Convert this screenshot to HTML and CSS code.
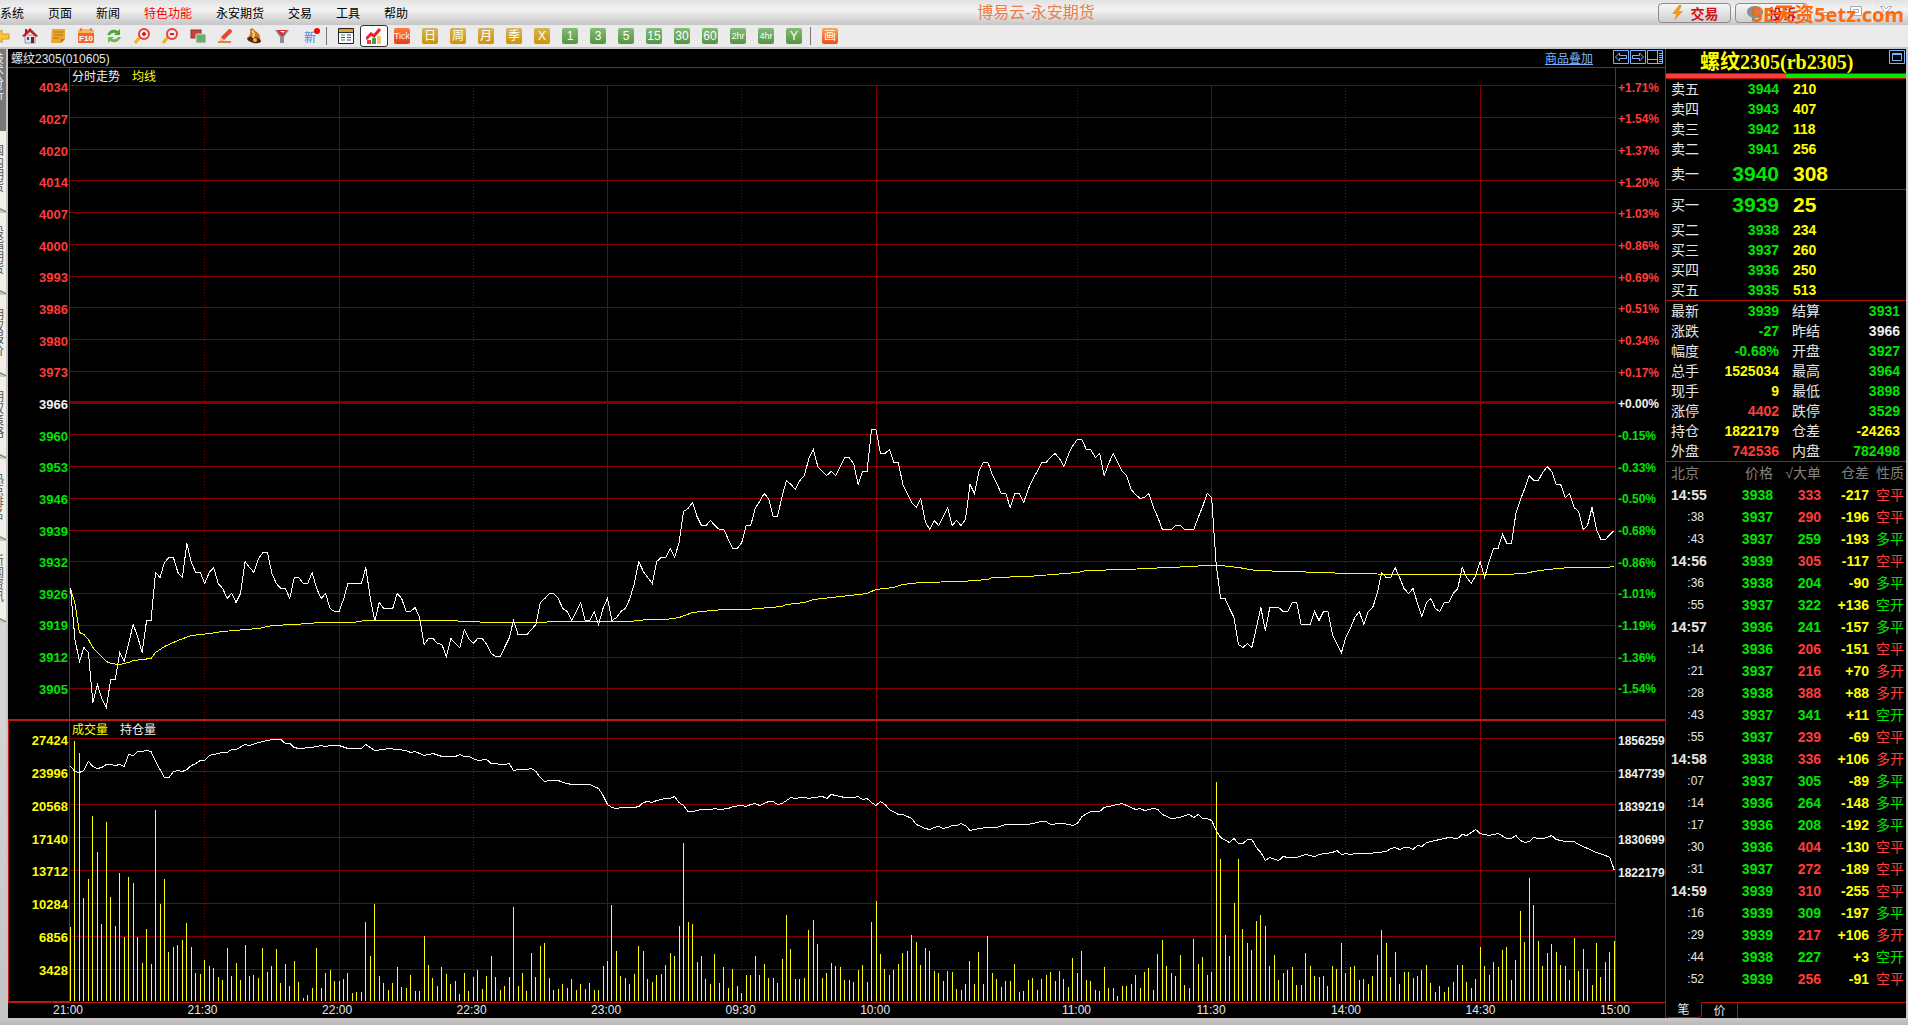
FILE: index.html
```html
<!DOCTYPE html>
<html lang="zh-CN">
<head>
  <meta charset="UTF-8">
  <meta name="viewport" content="width=device-width, initial-scale=1.0">
  <title>博易云-永安期货</title>
  <link rel="stylesheet" href="styles.css">
</head>
<body>
  <header class="titlebar">
    <nav class="menu">
      <a href="#">系统</a>
      <a href="#">页面</a>
      <a href="#">新闻</a>
      <a href="#" class="hot">特色功能</a>
      <a href="#">永安期货</a>
      <a href="#">交易</a>
      <a href="#">工具</a>
      <a href="#">帮助</a>
    </nav>
    <h1>博易云-永安期货</h1>
    <div class="window-actions">
      <button class="pill"><svg width="14" height="16" viewBox="0 0 14 16"><path d="M8 0L1 9h4L3 16l9-10H8l3-6z" fill="#f39a1e"/></svg>交易</button>
      <button class="pill"><svg width="16" height="16" viewBox="0 0 16 16"><path d="M8 1c5 0 8 2.500 8 6s-3 6-7 6l-4 3 0-3.500C2 11.500 0 9.500 0 7c0-3.500 3-6 8-6z" fill="#8d8d8d"/></svg>投诉</button>
      <button class="win" aria-label="最小化"><svg width="14" height="12" viewBox="0 0 14 12"><path d="M1.500 7.500h11v3h-11z" fill="#fff" stroke="#aaa"/></svg></button>
      <button class="win" aria-label="最大化"><svg width="14" height="12" viewBox="0 0 14 12"><path d="M1.500 1.500h11v9h-11zM4.500 4.500h5v3h-5z" fill="#fff" stroke="#aaa"/></svg></button>
      <button class="win" aria-label="关闭"><svg width="14" height="12" viewBox="0 0 14 12"><path d="M1.500 1.500h3L7 4l2.500-2.500h3L9 6l3.500 4.500h-3L7 8l-2.500 2.500h-3L5 6z" fill="#fff" stroke="#aaa"/></svg></button>
      <span class="site-mark">5E天资5etz.com</span>
    </div>
  </header>

  <div class="toolbar">
    <button aria-label="后退"><svg viewBox="0 0 16 16"><path d="M1 8l7-6v4h7v5H8v4z" fill="#fdc63a" stroke="#d99a10"/></svg></button>
    <button aria-label="首页"><svg viewBox="0 0 16 16"><path d="M3 7h10v8H3z" fill="#dfe3ea" stroke="#8f97a5"/><path d="M9 9h3v6H9z" fill="#7a1a22"/><path d="M5 9h2v3H5z" fill="#44516a"/><path d="M8 0L0 8l2 1 6-5 6 5 2-1z" fill="#c8202f"/><path d="M3 1h2v4L3 6z" fill="#9c1b28"/></svg></button>
    <button aria-label="公告"><svg viewBox="0 0 16 16"><path d="M2 1h13v10l-4 4H1z" fill="#eaa62c"/><path d="M11 15v-4h4z" fill="#b9770f"/><path d="M4 4h9M4 7h9M3 10h6" stroke="#b57812"/></svg></button>
    <button aria-label="F10"><svg viewBox="0 0 16 16"><rect x="0" y="2" width="16" height="13" rx="1" fill="#f0682e"/><path d="M0 3q0-2 2-2h11q3 0 3 2v2H0z" fill="#ffb35a"/><path d="M3 0v3M13 0v3" stroke="#a44"/><text x="8" y="13" class="icon-f10">F10</text></svg></button>
    <button aria-label="刷新"><svg viewBox="0 0 16 16"><path d="M1 7q4-8 11-4l2-2v6H8l2-2Q6 4 4 7z" fill="#4fa53a"/><path d="M15 9q-4 8-11 4l-2 2V9h6l-2 2q4 1 6-2z" fill="#6cbb4f"/></svg></button>
    <button aria-label="放大"><svg viewBox="0 0 16 16"><path d="M1 15l5-6" stroke="#f7b21c" stroke-width="3"/><circle cx="10" cy="6" r="5" fill="#fbe9ea" stroke="#e5403c" stroke-width="2"/><path d="M8 6h4M10 4v4" stroke="#d22" stroke-width="2"/></svg></button>
    <button aria-label="缩小"><svg viewBox="0 0 16 16"><path d="M1 15l5-6" stroke="#f7b21c" stroke-width="3"/><circle cx="10" cy="6" r="5" fill="#fbe9ea" stroke="#e5403c" stroke-width="2"/><path d="M8 6h4" stroke="#d22" stroke-width="2"/></svg></button>
    <button aria-label="叠加"><svg viewBox="0 0 16 16"><rect x="1" y="2" width="10" height="8" fill="#c8403c" stroke="#9c2a28"/><rect x="6" y="6" width="10" height="9" rx="1" fill="#69ad70" stroke="#cfe6d0"/></svg></button>
    <button aria-label="画线"><svg viewBox="0 0 16 16"><path d="M0 14h13" stroke="#e0843c" stroke-width="2"/><path d="M2 13l1-4 8-8q3 0 3 3l-8 8z" fill="#e24a30"/><path d="M2 13l1-4 3 3z" fill="#f5cf9a"/></svg></button>
    <button aria-label="预警"><svg viewBox="0 0 16 16"><path d="M4 1q3-2 4 1 6 3 6 8l1 4L1 10q4-2 3-9z" fill="#c9792a"/><ellipse cx="8" cy="12" rx="7" ry="3" transform="rotate(12 8 12)" fill="#5f2410"/><circle cx="9" cy="12" r="2" fill="#f2c03a"/><path d="M6 3q3 2 1 7" stroke="#ffd679" stroke-width="2" fill="none"/></svg></button>
    <button aria-label="筛选"><svg viewBox="0 0 16 16"><path d="M1 2h14l-5 7v6H6V9z" fill="#8c9096"/><path d="M3 2h10L9 8H7z" fill="#e3262c"/><path d="M6 3h5L9 5z" fill="#fff"/></svg></button>
    <button class="new" aria-label="新功能">新<i></i></button>
    <span class="sep"></span>
    <button aria-label="报价"><svg viewBox="0 0 16 16"><path d="M.5.5h15v15H.5z" fill="#fff" stroke="#222"/><path d="M1 1h14v3H1z" fill="#d9a520"/><path d="M1 4.500h14" stroke="#333"/><path d="M3 7h4M3 12h4" stroke="#1a9c3a"/><path d="M9 7h4M9 12h4" stroke="#2a3fb0"/><path d="M3 9.500h4M9 9.500h4" stroke="#c22"/></svg></button>
    <button class="active" aria-label="分时图"><svg viewBox="0 0 16 16"><path d="M1 12h4v4H1z" fill="#d14a36"/><path d="M6 10h4v6H6z" fill="#46a049"/><path d="M11 8h4v8h-4z" fill="#e9c96a"/><path d="M0 11l5-5 3 2 6-7" fill="none" stroke="#e8202c" stroke-width="3"/></svg></button>
    <button class="period red tick-btn">Tick</button>
    <button class="period gold">日</button>
    <button class="period gold">周</button>
    <button class="period gold">月</button>
    <button class="period gold">季</button>
    <button class="period gold">X</button>
    <button class="period green">1</button>
    <button class="period green">3</button>
    <button class="period green">5</button>
    <button class="period green">15</button>
    <button class="period green">30</button>
    <button class="period green">60</button>
    <button class="period green hour">2hr</button>
    <button class="period green hour">4hr</button>
    <button class="period green">Y</button>
    <span class="sep"></span>
    <button class="period orange">画</button>
  </div>

  <main class="workspace">
    <nav class="side-tabs">
      <a href="#" class="current"><span>技术分析</span></a>
      <a href="#"><span>国内期货</span></a>
      <a href="#"><span>股指期货</span></a>
      <a href="#"><span>期权报价</span></a>
      <a href="#"><span>期权策略</span></a>
      <a href="#"><span>热点排名</span></a>
      <a href="#"><span>新闻资讯</span></a>
    </nav>

    <section class="chart">
      <div class="chart-head">
        <span>螺纹2305(010605)</span>
        <div class="chart-tools">
          <a href="#">商品叠加</a>
          <button aria-label="上一个"><svg width="16" height="14" viewBox="0 0 16 14"><path d="M.5.5h15v13H.5zM2.500 7l4-4v2.500h7v3h-7V11z"/></svg></button>
          <button aria-label="下一个"><svg width="16" height="14" viewBox="0 0 16 14"><path d="M.5.5h15v13H.5zM13.500 7l-4-4v2.500h-7v3h7V11z"/></svg></button>
          <button aria-label="布局"><svg width="16" height="14" viewBox="0 0 16 14"><path d="M.5.5h15v13H.5zM.5 9.500h10M10.500.5v13M12 3.500h3M12 5.500h3M12 7.500h3M12 9.500h3M12 11.500h3"/></svg></button>
        </div>
      </div>

      <div class="pane price-pane">
        <ul class="scale left">
          <li class="up">4034</li><li class="up">4027</li><li class="up">4020</li><li class="up">4014</li><li class="up">4007</li>
          <li class="up">4000</li><li class="up">3993</li><li class="up">3986</li><li class="up">3980</li><li class="up">3973</li>
          <li class="flat">3966</li>
          <li class="down">3960</li><li class="down">3953</li><li class="down">3946</li><li class="down">3939</li><li class="down">3932</li>
          <li class="down">3926</li><li class="down">3919</li><li class="down">3912</li><li class="down">3905</li>
        </ul>
        <div class="plot">
          <svg id="price" viewBox="0 0 1545 651" preserveAspectRatio="none"></svg>
          <p class="legend"><span class="white">分时走势</span><span class="vol">均线</span></p>
        </div>
        <ul class="scale right">
          <li class="up">+1.71%</li><li class="up">+1.54%</li><li class="up">+1.37%</li><li class="up">+1.20%</li><li class="up">+1.03%</li>
          <li class="up">+0.86%</li><li class="up">+0.69%</li><li class="up">+0.51%</li><li class="up">+0.34%</li><li class="up">+0.17%</li>
          <li class="flat">+0.00%</li>
          <li class="down">-0.15%</li><li class="down">-0.33%</li><li class="down">-0.50%</li><li class="down">-0.68%</li><li class="down">-0.86%</li>
          <li class="down">-1.01%</li><li class="down">-1.19%</li><li class="down">-1.36%</li><li class="down">-1.54%</li>
        </ul>
      </div>

      <div class="pane volume-pane">
        <ul class="scale left">
          <li class="vol">27424</li><li class="vol">23996</li><li class="vol">20568</li><li class="vol">17140</li>
          <li class="vol">13712</li><li class="vol">10284</li><li class="vol">6856</li><li class="vol">3428</li>
        </ul>
        <div class="plot">
          <svg id="volume" viewBox="0 1 1545 281" preserveAspectRatio="none"></svg>
          <p class="legend"><span class="vol">成交量</span><span class="white">持仓量</span></p>
        </div>
        <ul class="scale right">
          <li class="flat">1856259</li><li class="flat">1847739</li><li class="flat">1839219</li><li class="flat">1830699</li>
          <li class="flat">1822179</li><li></li><li></li><li></li>
        </ul>
      </div>

      <ol class="times">
        <li>21:00</li><li>21:30</li><li>22:00</li><li>22:30</li><li>23:00</li><li>09:30</li>
        <li>10:00</li><li>11:00</li><li>11:30</li><li>14:00</li><li>14:30</li><li>15:00</li>
      </ol>
    </section>

    <aside class="quote">
      <div class="quote-head">
        <h2>螺纹2305(rb2305)</h2>
        <button aria-label="展开"><svg width="16" height="14" viewBox="0 0 16 14"><path d="M.5.5h15v13H.5zM3.500 3.500h9v7h-9zM3.500 4.500h9"/></svg></button>
      </div>
      <div class="ratio"><span></span></div>

      <table class="book">
        <tr><th>卖五</th><td class="down">3944</td><td class="lots">210</td></tr>
        <tr><th>卖四</th><td class="down">3943</td><td class="lots">407</td></tr>
        <tr><th>卖三</th><td class="down">3942</td><td class="lots">118</td></tr>
        <tr><th>卖二</th><td class="down">3941</td><td class="lots">256</td></tr>
        <tr class="best"><th>卖一</th><td class="down">3940</td><td class="lots">308</td></tr>
      </table>
      <table class="book">
        <tr class="best"><th>买一</th><td class="down">3939</td><td class="lots">25</td></tr>
        <tr><th>买二</th><td class="down">3938</td><td class="lots">234</td></tr>
        <tr><th>买三</th><td class="down">3937</td><td class="lots">260</td></tr>
        <tr><th>买四</th><td class="down">3936</td><td class="lots">250</td></tr>
        <tr><th>买五</th><td class="down">3935</td><td class="lots">513</td></tr>
      </table>
      <table class="stats">
        <tr><th>最新</th><td class="down">3939</td><th>结算</th><td class="down">3931</td></tr>
        <tr><th>涨跌</th><td class="down">-27</td><th>昨结</th><td class="flat">3966</td></tr>
        <tr><th>幅度</th><td class="down">-0.68%</td><th>开盘</th><td class="down">3927</td></tr>
        <tr><th>总手</th><td class="vol">1525034</td><th>最高</th><td class="down">3964</td></tr>
        <tr><th>现手</th><td class="vol">9</td><th>最低</th><td class="down">3898</td></tr>
        <tr><th>涨停</th><td class="up">4402</td><th>跌停</th><td class="down">3529</td></tr>
        <tr><th>持仓</th><td class="vol">1822179</td><th>仓差</th><td class="vol">-24263</td></tr>
        <tr><th>外盘</th><td class="up">742536</td><th>内盘</th><td class="down">782498</td></tr>
      </table>

      <table class="ticks">
        <thead>
          <tr><th>北京</th><th>价格</th><th>√大单</th><th>仓差</th><th>性质</th></tr>
        </thead>
        <tbody>
          <tr class="minute"><td>14:55</td><td>3938</td><td class="up">333</td><td>-217</td><td class="up">空平</td></tr>
          <tr><td>:38</td><td>3937</td><td class="up">290</td><td>-196</td><td class="up">空平</td></tr>
          <tr><td>:43</td><td>3937</td><td class="down">259</td><td>-193</td><td class="down">多平</td></tr>
          <tr class="minute"><td>14:56</td><td>3939</td><td class="up">305</td><td>-117</td><td class="up">空平</td></tr>
          <tr><td>:36</td><td>3938</td><td class="down">204</td><td>-90</td><td class="down">多平</td></tr>
          <tr><td>:55</td><td>3937</td><td class="down">322</td><td>+136</td><td class="down">空开</td></tr>
          <tr class="minute"><td>14:57</td><td>3936</td><td class="down">241</td><td>-157</td><td class="down">多平</td></tr>
          <tr><td>:14</td><td>3936</td><td class="up">206</td><td>-151</td><td class="up">空平</td></tr>
          <tr><td>:21</td><td>3937</td><td class="up">216</td><td>+70</td><td class="up">多开</td></tr>
          <tr><td>:28</td><td>3938</td><td class="up">388</td><td>+88</td><td class="up">多开</td></tr>
          <tr><td>:43</td><td>3937</td><td class="down">341</td><td>+11</td><td class="down">空开</td></tr>
          <tr><td>:55</td><td>3937</td><td class="up">239</td><td>-69</td><td class="up">空平</td></tr>
          <tr class="minute"><td>14:58</td><td>3938</td><td class="up">336</td><td>+106</td><td class="up">多开</td></tr>
          <tr><td>:07</td><td>3937</td><td class="down">305</td><td>-89</td><td class="down">多平</td></tr>
          <tr><td>:14</td><td>3936</td><td class="down">264</td><td>-148</td><td class="down">多平</td></tr>
          <tr><td>:17</td><td>3936</td><td class="down">208</td><td>-192</td><td class="down">多平</td></tr>
          <tr><td>:30</td><td>3936</td><td class="up">404</td><td>-130</td><td class="up">空平</td></tr>
          <tr><td>:31</td><td>3937</td><td class="up">272</td><td>-189</td><td class="up">空平</td></tr>
          <tr class="minute"><td>14:59</td><td>3939</td><td class="up">310</td><td>-255</td><td class="up">空平</td></tr>
          <tr><td>:16</td><td>3939</td><td class="down">309</td><td>-197</td><td class="down">多平</td></tr>
          <tr><td>:29</td><td>3939</td><td class="up">217</td><td>+106</td><td class="up">多开</td></tr>
          <tr><td>:44</td><td>3938</td><td class="down">227</td><td>+3</td><td class="down">空开</td></tr>
          <tr><td>:52</td><td>3939</td><td class="up">256</td><td>-91</td><td class="up">空平</td></tr>
        </tbody>
      </table>

      <div class="quote-tabs">
        <button class="current">笔</button>
        <button>价</button>
        <span></span>
      </div>
    </aside>
  </main>

  <footer class="statusbar"></footer>

  <script src="chart.js"></script>
</body>
</html>
```

FILE: styles.css
```css
* {
  box-sizing: border-box;
  margin: 0;
  padding: 0;
}

body {
  display: flex;
  flex-direction: column;
  min-height: 100vh;
  overflow-x: hidden;
  font-family: "Liberation Sans", "Noto Sans CJK SC", sans-serif;
  font-size: 12px;
  background: #c8c8c8;
  color: #e6e6e6;
}

button {
  border: none;
  background: none;
  font-family: inherit;
  cursor: pointer;
}

ul, ol {
  list-style: none;
}

table {
  width: 100%;
  table-layout: fixed;
  border-collapse: collapse;
}

.up { color: #ff3c3c; }
.down { color: #00e600; }
.flat { color: #f0f0f0; }
.vol { color: #ffff00; }
.white { color: #f0f0f0; }

/* title bar */
.titlebar {
  display: grid;
  grid-template-columns: 1fr auto 1fr;
  align-items: center;
  height: 25px;
  background: linear-gradient(#e2e2e2, #f3f3f3 40%, #c6c6c6);
}

.menu {
  display: flex;
  gap: 24px;
}

.menu a {
  color: #000;
  text-decoration: none;
  white-space: nowrap;
}

.menu a.hot {
  color: #f00;
}

.titlebar h1 {
  margin-left: 164px;
  font-size: 16px;
  font-weight: normal;
  line-height: 24px;
  color: #ee7d47;
}

.window-actions {
  display: flex;
  align-items: center;
  justify-content: flex-end;
  gap: 4px;
  position: relative;
  padding-right: 10px;
}

.pill {
  display: flex;
  align-items: center;
  justify-content: center;
  gap: 6px;
  width: 73px;
  height: 20px;
  border: 1px solid #8c8c8c;
  border-radius: 4px;
  background: linear-gradient(#f6f6f6, #cfcfcf);
  font-size: 14px;
  font-weight: bold;
  color: #d8101c;
}

.win {
  width: 26px;
  height: 20px;
  border-left: 1px solid #f4f4f4;
}

.site-mark {
  position: absolute;
  right: 4px;
  top: -2px;
  font-family: "Noto Sans", "Noto Sans CJK SC", sans-serif;
  font-size: 20px;
  font-weight: bold;
  line-height: 28px;
  color: #ff6a0a;
}

/* toolbar */
.toolbar {
  display: flex;
  align-items: center;
  height: 24px;
  margin-left: -12px;
  border-bottom: 2px solid #c8c4c4;
  background: #ebebeb;
}

.toolbar button {
  display: flex;
  align-items: center;
  justify-content: center;
  flex: none;
  width: 28px;
  height: 22px;
}

.toolbar svg {
  width: 16px;
  height: 16px;
}

.toolbar .active {
  border: 1px solid #333;
  border-radius: 3px;
  background: #fff;
}

.toolbar .new {
  position: relative;
  font-size: 12px;
  color: #3c8ce6;
}

.new i {
  position: absolute;
  top: 3px;
  right: 4px;
  width: 6px;
  height: 6px;
  border-radius: 50%;
  background: #f00;
}

.sep {
  width: 1px;
  height: 18px;
  margin: 0 5px 0 2px;
  background: #777;
}

.toolbar .period {
  width: 16px;
  height: 16px;
  margin: 0 6px;
  border-radius: 2px;
  font-size: 12px;
  line-height: 16px;
  color: #fff;
}

.toolbar .gold { background: linear-gradient(#d3b65a, #d09200); }
.toolbar .green { background: linear-gradient(#84bd76, #549544); }
.toolbar .red { background: linear-gradient(#ff7a3c, #e83c1e); }
.toolbar .orange { background: linear-gradient(#ffa84a, #f04a1e); }

.toolbar .hour,
.toolbar .tick-btn {
  font-size: 9px;
}

.icon-f10 {
  font-size: 8px;
  font-weight: bold;
  text-anchor: middle;
  fill: #fff;
}

/* workspace */
.workspace {
  display: flex;
  flex: 1;
  padding-right: 2px;
}

.side-tabs {
  width: 8px;
  border-right: 2px solid #c8c4c4;
  overflow: hidden;
  background: linear-gradient(#f0efe8, #d2d2d2 75%, #c4c4c4);
}

.side-tabs a {
  display: flex;
  justify-content: flex-end;
  height: 82px;
  padding: 14px 2px 0 0;
  background: linear-gradient(25deg, #c8c8c8 3px, #888 3px, #888 4px, #f0efe8 5px);
  line-height: 12px;
  color: #555;
  text-decoration: none;
}

.side-tabs a.current {
  padding-top: 4px;
  background: #777;
  color: #eee;
}

.side-tabs span {
  flex: none;
  width: 12px;
}

/* chart */
.chart {
  display: flex;
  flex-direction: column;
  flex: 1;
  min-width: 0;
  background: #000;
}

.chart-head {
  display: flex;
  align-items: center;
  justify-content: space-between;
  height: 19px;
  padding: 0 2px 2px 3px;
  border-bottom: 1px solid #b41400;
}

.chart-tools {
  display: flex;
  align-items: center;
  gap: 1px;
}

.chart-tools a {
  margin-right: 19px;
  color: #78b4ff;
}

.chart-tools button,
.quote-head button {
  height: 14px;
}

.chart-tools svg,
.quote-head svg {
  display: block;
  fill: none;
  stroke: #78b4ff;
}

.pane {
  display: grid;
  grid-template-columns: 61px 1fr 49px;
}

.price-pane {
  flex: 651 1 0;
  border-bottom: 2px solid #c01810;
}

.volume-pane {
  flex: 281 1 0;
  border-bottom: 1px solid #c01810;
}

.scale {
  display: flex;
  flex-direction: column;
  padding: 4px 2px 14px;
  font-weight: bold;
}

.scale li {
  display: flex;
  align-items: center;
  flex: 1 1 0;
  min-height: 0;
}

.scale.left {
  padding-right: 1px;
  font-size: 13px;
}

.scale.left li {
  justify-content: flex-end;
}

.volume-pane .scale {
  padding-top: 3px;
}

.volume-pane .scale.left {
  border-left: 1px solid #c01810;
  border-bottom: 1px solid #c01810;
}

.plot {
  display: grid;
  min-width: 0;
  border-left: 1px solid #b41400;
  border-right: 1px solid #b41400;
}

.plot svg,
.legend {
  grid-area: 1 / 1;
}

/* takes its height from the pane, never the other way round */
.plot svg {
  width: 100%;
  height: 0;
  min-height: 100%;
  shape-rendering: crispEdges;
  fill: none;
}

.plot path {
  vector-effect: non-scaling-stroke;
}

.grid { stroke: #840000; }
.grid.dotted { stroke-dasharray: 1 2; }
.grid.zero { stroke-width: 2px; }
.line { stroke: #fff; }
.average, .bars { stroke: #ffff00; }

.legend {
  display: flex;
  gap: 12px;
  height: 18px;
  padding-left: 2px;
  line-height: 18px;
}

.times {
  display: grid;
  grid-template-columns: repeat(6, 30fr) 45fr repeat(4, 30fr) 0;
  height: 15px;
  margin: 0 49px 0 61px;
  line-height: 14px;
}

.times li {
  min-width: 0;
  margin-left: -16px;
  white-space: nowrap;
}

/* quote panel */
.quote {
  display: flex;
  flex-direction: column;
  flex: 0 0 241px;
  border-left: 1px solid #b41400;
  background: #000;
  overflow: hidden;
}

.quote-head {
  display: flex;
  align-items: flex-start;
  justify-content: space-between;
  height: 24px;
  padding: 1px 1px 0 34px;
}

.quote-head h2 {
  font-family: "Liberation Serif", "Noto Sans CJK SC", serif;
  font-size: 20px;
  line-height: 24px;
  color: #ffff00;
}

.ratio {
  height: 6px;
  border-top: 1px solid #b41400;
  border-bottom: 1px solid #b41400;
  background: #00e600;
}

.ratio span {
  display: block;
  width: 50%;
  height: 4px;
  background: #ff3c3c;
}

.book, .stats {
  border-bottom: 1px solid #b41400;
  border-collapse: separate;
  border-spacing: 0;
}

.book tr, .stats tr {
  height: 20px;
}

.book .best {
  height: 30px;
}

.quote th {
  padding-left: 5px;
  font-size: 14px;
  font-weight: normal;
  line-height: 20px;
  text-align: left;
  white-space: nowrap;
}

.quote td {
  font-size: 14px;
  font-weight: bold;
  line-height: 20px;
  text-align: right;
}

.quote .best td {
  font-size: 21px;
}

.book th, .stats th:first-child {
  width: 40px;
}

.book td:nth-child(2), .stats td:nth-child(2) {
  width: 73px;
}

.quote .book .lots {
  padding-left: 14px;
  text-align: left;
  color: #ffff00;
}

.stats th:nth-child(3) {
  width: 48px;
  padding-left: 13px;
}

.stats td:last-child {
  padding-right: 6px;
}

.ticks tr {
  height: 22px;
}

.ticks th {
  width: 48px;
  color: #808080;
}

.quote .ticks th:not(:first-child) {
  padding-left: 0;
  text-align: right;
}

.ticks th:first-child { width: 42px; }
.ticks th:nth-child(2) { width: 65px; }
.ticks th:last-child { width: 37px; }

.quote .ticks td:first-child {
  padding: 0 4px 0 5px;
  font-size: 12px;
  font-weight: normal;
}

.quote .ticks .minute td:first-child {
  padding-right: 0;
  font-size: 14px;
  font-weight: bold;
  text-align: left;
}

.ticks td:nth-child(2) { color: #00e600; }
.ticks td:nth-child(4) { color: #ffff00; }

.quote .ticks td:last-child {
  font-weight: normal;
}

.quote .ticks tr > :last-child {
  padding-right: 2px;
}

.quote-tabs {
  display: flex;
  height: 16px;
  margin-top: auto;
}

.quote-tabs button {
  width: 36px;
  border-top: 1px solid #b41400;
  border-right: 1px solid #b41400;
  font-size: 12px;
  line-height: 14px;
  color: #e6e6e6;
}

.quote-tabs .current {
  border-top: none;
  border-bottom: 1px solid #b41400;
  border-radius: 0 0 4px 4px;
}

.quote-tabs span {
  flex: 1;
  border-top: 1px solid #b41400;
}

.statusbar {
  height: 7px;
  background: linear-gradient(#ccc8c8, #b8b8b8);
}
```

FILE: chart.js
```js
// one value per trading minute, 21:00 - 15:00
const STEP = 4.475;

const price = [
  520,571,593,579,584,634,616,630,639,611, 611,584,593,575,556,568,584,552,552,504,
  509,494,489,489,504,509,475,494,504,504, 515,504,499,515,520,530,525,534,525,493,
  499,504,490,484,484,505,515,520,520,530, 509,509,515,515,504,520,530,525,540,543,
  543,531,515,515,515,515,499,530,552,534, 540,540,540,525,530,543,543,539,549,576,
  570,570,575,576,588,570,575,579,561,570, 575,570,570,576,585,588,588,579,570,552,
  566,566,566,561,556,534,530,525,525,530, 540,543,552,543,534,552,552,543,556,540,
  530,552,549,543,540,530,515,493,503,509, 515,493,489,489,480,489,474,443,440,434,
  448,457,457,452,457,461,461,471,480,480, 474,457,457,440,433,425,430,448,448,428,
  412,416,421,412,407,390,381,398,403,407, 403,407,398,389,389,395,416,403,403,361,
  361,385,385,381,394,394,416,425,434,439, 430,453,461,452,457,448,439,457,452,457,
  451,416,425,403,394,394,406,415,425,425, 439,425,425,434,421,411,403,394,394,389,
  385,390,398,386,377,371,371,381,381,389, 385,407,395,385,394,403,407,421,426,430,
  429,425,439,449,461,461,461,457,457,461, 461,461,449,438,425,429,495,530,530,540,
  549,576,579,575,579,559,539,562,539,539, 539,543,543,534,534,556,556,556,543,552,
  543,543,566,575,584,569,560,549,543,556, 543,539,525,504,509,509,499,509,520,525,
  520,535,548,534,530,540,543,534,534,525, 520,499,509,515,507,493,509,493,480,480,
  466,475,475,445,431,420,407,412,412,404, 398,403,416,416,429,425,439,443,461,457,
  439,461,471,471,466,462
];

const average = [
  [0,520],[1,535],[2,564],[3,566],[4,571],[5,579],[6,584],[7,588],[8,593],[9,595],[11,596],[13,594],[14,592],[18,590],
  [19,584],[21,578],[22,576],[24,572],[27,567],[31,565],[34,563],[42,560],[45,557],[50,556],[56,554],[63,554],[66,552],
  [84,552],[94,554],[106,554],[107,553],[125,553],[129,551],[133,551],[136,549],[139,544],[141,543],[146,541],[151,541],
  [159,538],[160,536],[164,534],[166,531],[172,528],[178,525],[180,521],[184,519],[186,516],[190,514],[199,513],[205,511],
  [206,509],[214,508],[225,504],[227,502],[236,501],[245,499],[251,498],[253,497],[257,497],[261,499],[265,502],[272,503],
  [280,504],[285,505],[299,506],[320,506],[325,505],[327,503],[330,501],[335,499],[343,499],[345,498]
];

const volume = [
  74,260,248,103,122,185,149,77,179,104, 75,128,64,124,118,64,38,72,37,191,
  97,122,49,54,56,61,78,54,28,27, 41,35,33,24,21,53,25,38,21,56,
  25,26,23,53,29,35,52,18,37,15, 40,19,3,6,13,53,13,28,31,20,
  20,22,28,8,9,9,79,45,97,25, 18,11,18,34,14,13,26,10,10,65,
  36,23,15,34,27,17,20,7,28,10, 24,31,12,25,45,24,11,15,24,94,
  15,28,10,48,24,55,58,23,11,12, 17,13,22,11,17,12,18,11,11,35,
  40,96,50,25,23,17,27,55,50,22, 19,26,27,36,48,45,75,158,79,77,
  39,45,22,17,47,18,34,13,32,15, 8,26,26,45,26,37,23,23,18,42,
  86,52,22,22,23,71,81,57,23,28, 38,35,34,21,21,19,31,36,19,79,
  100,47,32,26,31,37,48,50,66,59, 36,53,50,30,28,20,30,29,12,11,
  17,40,17,49,17,65,28,22,14,20, 20,37,9,10,21,23,11,22,26,29,
  20,30,22,14,43,28,50,21,20,11, 10,34,13,13,5,15,15,17,26,13,
  29,33,11,47,61,35,28,25,46,16, 13,62,37,44,26,29,219,142,66,45,
  98,142,72,58,51,80,86,75,35,46, 21,28,31,34,16,16,48,35,25,24,
  25,15,35,32,58,28,34,35,21,22, 17,25,46,71,58,24,49,17,29,29,
  23,25,31,36,18,9,15,9,14,19, 36,36,19,13,22,54,35,26,39,34,
  51,54,21,41,90,59,123,96,60,35, 48,57,49,36,35,21,63,30,52,32,
  16,58,24,39,49,60
];

const openInterest = [
  [0,46],[1,51],[2,52],[3,50],[4,41],[5,46],[6,48],[7,47],[8,44],[9,44],[10,45],[11,44],[12,46],[13,34],[14,35],[15,31],
  [16,31],[17,30],[18,31],[19,41],[20,49],[21,57],[22,57],[23,51],[24,50],[25,51],[26,49],[27,45],[28,43],[29,40],[30,40],
  [31,35],[32,34],[34,32],[35,32],[36,29],[37,29],[39,24],[40,25],[42,22],[45,19],[47,19],[48,23],[49,23],[50,27],[51,28],
  [54,27],[56,25],[57,26],[58,25],[60,25],[62,28],[65,28],[66,24],[68,30],[70,29],[71,28],[73,29],[75,30],[76,32],[77,31],
  [79,35],[81,33],[83,36],[86,36],[87,34],[88,36],[89,36],[91,40],[93,39],[94,43],[97,44],[98,43],[99,50],[100,49],[102,49],
  [103,48],[104,51],[105,57],[106,61],[107,60],[109,60],[110,62],[112,64],[116,64],[118,68],[119,75],[120,84],[121,87],
  [122,88],[123,87],[126,87],[127,86],[128,82],[129,81],[130,82],[131,80],[133,78],[134,78],[135,76],[136,82],[137,85],
  [138,91],[139,91],[141,89],[143,89],[144,88],[145,89],[147,88],[148,86],[150,85],[151,86],[152,84],[153,83],[154,85],
  [156,81],[157,81],[158,84],[159,83],[161,77],[162,78],[163,77],[164,77],[165,78],[166,77],[168,76],[169,78],[170,74],
  [173,77],[175,77],[176,76],[177,79],[178,78],[179,82],[180,85],[181,81],[182,84],[183,89],[185,94],[186,94],[188,98],
  [189,104],[191,108],[192,109],[193,107],[194,106],[195,108],[196,107],[197,105],[198,105],[199,103],[200,105],[201,110],
  [203,108],[205,107],[207,107],[209,104],[214,104],[217,101],[218,101],[219,104],[221,103],[222,103],[224,105],[225,103],
  [226,96],[228,91],[230,91],[231,87],[233,85],[235,83],[236,85],[238,89],[239,88],[240,90],[242,88],[243,89],[244,94],
  [246,98],[248,97],[249,95],[250,94],[251,97],[252,94],[253,98],[254,98],[255,100],[256,110],[257,117],[259,122],[260,118],
  [261,123],[262,123],[263,119],[264,119],[265,127],[266,132],[267,140],[268,137],[270,140],[271,136],[272,137],[274,137],
  [276,134],[278,136],[279,134],[282,132],[283,130],[284,134],[285,133],[286,134],[287,133],[290,133],[292,132],[294,131],
  [295,128],[296,127],[297,129],[298,127],[299,127],[300,129],[301,125],[302,126],[303,122],[305,120],[308,117],[310,118],
  [311,114],[312,115],[314,109],[315,113],[317,115],[319,113],[321,118],[322,118],[323,115],[324,120],[325,122],[326,121],
  [327,117],[328,118],[329,118],[330,117],[331,115],[332,119],[334,121],[336,121],[337,124],[339,128],[341,132],[343,135],
  [344,137],[345,150]
];

const x = minute => 0.5 + minute * STEP;

function addPath(svg, className, d) {
  const path = document.createElementNS('http://www.w3.org/2000/svg', 'path');
  path.setAttribute('class', className);
  path.setAttribute('d', d);
  svg.appendChild(path);
}

function drawLine(svg, className, points) {
  addPath(svg, className, 'M' + points.map(p => x(p[0]) + ' ' + (p[1] + 0.5)).join('L'));
}

function drawGrid(svg, rows, top, gap, from, bottom) {
  let d = '';
  for (let i = 0; i < rows; i++) d += `M0 ${top + i * gap}H1545`;
  addPath(svg, 'grid', d);
  addPath(svg, 'grid', [60, 120, 180, 255, 315].map(m => `M${x(m)} ${from}V${bottom}`).join(''));
  addPath(svg, 'grid dotted', [30, 90, 150, 225, 285].map(m => `M${x(m)} ${from}V${bottom}`).join(''));
}

const priceSvg = document.getElementById('price');
drawGrid(priceSvg, 20, 17.5, 31.75, 17, 651);
addPath(priceSvg, 'grid zero', 'M0 334H1545');
drawLine(priceSvg, 'line average', average);
drawLine(priceSvg, 'line', price.map((y, i) => [i, y]));

const volumeSvg = document.getElementById('volume');
drawGrid(volumeSvg, 8, 18.5, 33, 1, 282);
addPath(volumeSvg, 'bars', volume.map((h, i) => `M${x(i)} 281V${281 - h}`).join(''));
drawLine(volumeSvg, 'line', openInterest);
```
